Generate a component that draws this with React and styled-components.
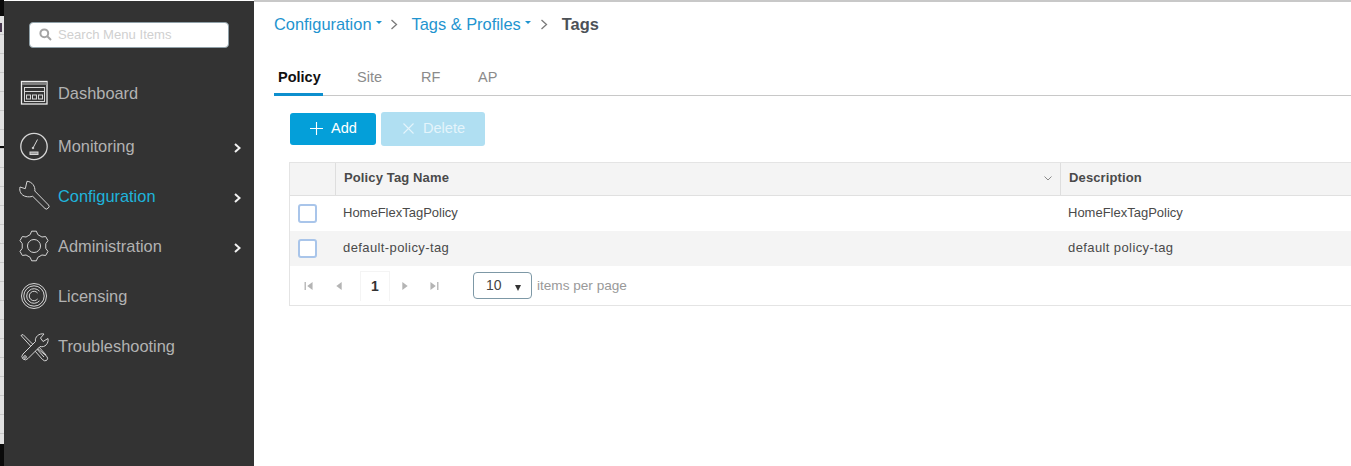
import React from "react";
import styled, { createGlobalStyle } from "styled-components";

const Global = createGlobalStyle`
  html, body { margin: 0; padding: 0; background: #fff; overflow: hidden; }
  body { font-family: "Liberation Sans", Arial, sans-serif; }
  * { box-sizing: border-box; }
`;

const Page = styled.div`
  display: flex;
  width: 1351px;
  height: 466px;
  overflow: hidden;
  background: #fff;
`;

const EdgeStrip = styled.div`
  width: 4px;
  flex: none;
  display: flex;
  flex-direction: column;
`;
const EdgeCap = styled.div`
  height: ${(p) => p.$h}px;
  flex: none;
  background: #0a0a0a;
`;
const EdgeBody = styled.div`
  flex: 1;
  background:
    linear-gradient(#0a0a0a, #0a0a0a) 0 130px / 100% 2px no-repeat,
    linear-gradient(#4a3a50, #4a3a50) 0 7px / 2px 9px no-repeat,
    repeating-linear-gradient(#e2e2e2 0 18px, #c8c8c8 18px 19px);
`;

const Sidebar = styled.aside`
  width: 250px;
  flex: none;
  margin-top: 1px;
  background: #333333;
  display: flex;
  flex-direction: column;
  padding: 21px 0 0 14px;
`;
const SearchBox = styled.div`
  width: 200px;
  height: 26px;
  margin-left: 11px;
  padding: 0 0 2px 9px;
  display: flex;
  align-items: center;
  gap: 6px;
  background: #fff;
  border: 1px solid #8fa0a8;
  border-radius: 4px;
  color: #d0d0d0;
  font-size: 13.1px;
`;
const Nav = styled.nav`
  margin-top: 20px;
  display: flex;
  flex-direction: column;
`;
const NavRow = styled.div`
  height: 50px;
  padding-right: 13px;
  margin-bottom: ${(p) => (p.$first ? 3 : 0)}px;
  display: flex;
  align-items: center;
  gap: 8px;
  font-size: 16.4px;
  color: ${(p) => (p.$active ? "#1fb4dc" : "#b2b2b2")};
`;
const NavIcon = styled.svg`
  width: 32px;
  height: 32px;
  flex: none;
  fill: none;
  stroke: ${(p) => p.$stroke || "#d6d6d6"};
  stroke-width: 1;
`;
const NavLabel = styled.span`
  flex: 1;
`;
const NavChevron = styled.svg`
  width: 7px;
  height: 10px;
  margin-top: 4px;
  fill: none;
  stroke: #f2f2f2;
  stroke-width: 2;
`;

const Main = styled.main`
  flex: 1;
  min-width: 0;
  border-top: 2px solid #c8c8c8;
  padding: 12px 0 0 20px;
  display: flex;
  flex-direction: column;
`;
const Breadcrumbs = styled.div`
  height: 20px;
  display: flex;
  align-items: center;
  font-size: 16.4px;
`;
const CrumbLink = styled.span`
  color: #1f94cf;
  display: flex;
  align-items: center;
  gap: 4px;
`;
const Caret = styled.i`
  width: 0;
  height: 0;
  margin-bottom: 3px;
  border-left: 3.5px solid transparent;
  border-right: 3.5px solid transparent;
  border-top: 3.5px solid #1f94cf;
`;
const CrumbSep = styled.svg`
  width: 8px;
  height: 11px;
  margin: 0 ${(p) => p.$right}px 0 ${(p) => p.$left}px;
  fill: none;
  stroke: #7a7a7a;
  stroke-width: 1.3;
`;
const CrumbCurrent = styled.span`
  color: #4c5157;
  font-weight: 700;
`;

const Tabs = styled.div`
  margin-top: 27px;
  height: 35px;
  display: flex;
  border-bottom: 1px solid #c8c8c8;
`;
const Tab = styled.div`
  width: ${(p) => p.$w}px;
  height: 35px;
  padding-left: ${(p) => p.$pad}px;
  padding-top: 8px;
  font-size: 14.5px;
  line-height: 17px;
  color: ${(p) => (p.$active ? "#111" : "#8b8b8b")};
  font-weight: ${(p) => (p.$active ? 700 : 400)};
  border-bottom: ${(p) => (p.$active ? "3px solid #0d8fce" : "none")};
`;

const Toolbar = styled.div`
  margin: 16px 0 0 16px;
  height: 34px;
  display: flex;
  align-items: center;
  gap: 5px;
`;
const ActionButton = styled.div`
  width: ${(p) => p.$w}px;
  height: ${(p) => (p.$off ? 34 : 32)}px;
  padding-bottom: 2px;
  border-radius: 3px;
  display: flex;
  align-items: center;
  justify-content: center;
  gap: 7px;
  font-size: 14.6px;
  color: ${(p) => (p.$off ? "#e4f4fb" : "#fff")};
  background: ${(p) => (p.$off ? "#b0dff2" : "#049fd9")};
`;
const ButtonGlyph = styled.svg`
  width: 15px;
  height: 15px;
  fill: none;
  stroke: currentColor;
  stroke-width: 1.1;
`;

const Grid = styled.div`
  margin: 16px 0 0 15px;
  border: 1px solid #e4e4e4;
  border-right: none;
`;
const Row = styled.div`
  display: grid;
  grid-template-columns: 46px 725px 1fr;
  align-items: center;
  height: ${(p) => p.$h}px;
  background: ${(p) => (p.$shade ? "#f4f4f4" : "#fff")};
  border-bottom: ${(p) => (p.$head ? "1px solid #e0e0e0" : "none")};
  font-size: 13px;
  color: #4a4a4a;
`;
const HeadCell = styled.div`
  height: 100%;
  padding: 0 8px 3px 8px;
  display: flex;
  align-items: center;
  justify-content: space-between;
  font-weight: 700;
  letter-spacing: 0.13px;
  color: #4a4a4a;
  border-right: ${(p) => (p.$rule ? "1px solid #dedede" : "none")};
`;
const SortGlyph = styled.svg`
  width: 8px;
  height: 5px;
  margin-top: 2px;
  fill: none;
  stroke: #8a8a8a;
  stroke-width: 1;
`;
const BodyCell = styled.div`
  padding: 0 0 2px ${(p) => p.$pad}px;
  letter-spacing: ${(p) => (p.$wide ? "0.4px" : "0")};
`;
const CheckBox = styled.div`
  width: 19px;
  height: 19px;
  margin-left: 8px;
  background: #fff;
  border: 2px solid #a9c5ea;
  border-radius: 3px;
`;

const Pager = styled.div`
  height: 39px;
  display: flex;
  align-items: center;
  padding-left: 14px;
  font-size: 13.6px;
  color: #999;
`;
const PageGlyph = styled.svg`
  width: 10px;
  height: 8px;
  margin-right: ${(p) => p.$gap}px;
  fill: #b4b4b4;
`;
const PageNumber = styled.div`
  width: 30px;
  height: 30px;
  margin-right: 10px;
  display: flex;
  align-items: center;
  justify-content: center;
  font-weight: 700;
  font-size: 14px;
  color: #333;
  border: 1px solid #f4f4f4;
  border-bottom: none;
`;
const PageSize = styled.div`
  width: 59px;
  height: 27px;
  margin-left: 34px;
  padding: 0 10px 2px 12px;
  display: flex;
  align-items: center;
  justify-content: space-between;
  font-size: 14px;
  color: #444;
  border: 1px solid #7d98a6;
  border-radius: 4px;
`;
const SizeArrow = styled.i`
  width: 0;
  height: 0;
  margin-top: 6px;
  border-left: 3.5px solid transparent;
  border-right: 3.5px solid transparent;
  border-top: 6px solid #333;
`;
const PagerNote = styled.span`
  margin-left: 5px;
`;

const gearPath = (() => {
  const teeth = 6, c = 16, out = 15, inn = 12, pts = [];
  for (let i = 0; i < teeth; i++) {
    const a = (i / teeth) * Math.PI * 2 - Math.PI / 2;
    const s = Math.PI / teeth;
    [[inn, -0.62], [out, -0.3], [out, 0.3], [inn, 0.62]].forEach(([r, k]) => {
      const t = a + k * s;
      pts.push(`${(c + r * Math.cos(t)).toFixed(2)} ${(c + r * Math.sin(t)).toFixed(2)}`);
    });
  }
  return "M" + pts.join("L") + "Z";
})();

const DashboardIcon = () => (
  <NavIcon viewBox="0 0 32 32">
    <rect x="3.5" y="4.5" width="25.5" height="22.5" stroke="#ececec" strokeWidth="1.3" />
    <rect x="4" y="5" width="24.5" height="3" fill="#808080" stroke="none" />
    <rect x="6.5" y="10.5" width="20" height="4" />
    <rect x="6.5" y="14.5" width="20" height="10" />
    <rect x="8.5" y="18" width="4" height="4" />
    <rect x="14.5" y="18" width="4" height="4" />
    <rect x="20.5" y="18" width="4" height="4" />
  </NavIcon>
);
const MonitoringIcon = () => (
  <NavIcon viewBox="0 0 32 32">
    <circle cx="16" cy="16.5" r="13.2" strokeWidth="1.3" />
    <path d="M15 18 L19.5 9.5" />
    <circle cx="15" cy="18" r="0.8" fill="#dcdcdc" />
    <rect x="12" y="22" width="8" height="2.5" fill="#999" />
  </NavIcon>
);
const ConfigurationIcon = () => (
  <NavIcon viewBox="0 0 32 32">
    <path d="M9 1.3 L7.3 8.7 L2 7 C1 11 3 15.5 8 16.5 C10 17 12.5 17 14.7 16.3 L27 28.5 Q28.5 30 30.3 28 Q32 26.5 30.5 25 L16.8 11 C17.5 6.5 14 1.5 9 1.3Z" />
  </NavIcon>
);
const AdministrationIcon = () => (
  <NavIcon viewBox="0 0 32 32">
    <path d={gearPath} />
    <circle cx="16" cy="16" r="6.5" />
  </NavIcon>
);
const LicensingIcon = () => (
  <NavIcon viewBox="0 0 32 32">
    <circle cx="16" cy="16" r="12.5" />
    <circle cx="16" cy="16" r="10.2" />
    <path d="M21.5 11.2 A7.3 7.3 0 1 0 21.5 20.8" />
    <path d="M19.6 13 A4.7 4.7 0 1 0 19.6 19" />
  </NavIcon>
);
const TroubleshootingIcon = () => (
  <NavIcon viewBox="0 0 32 32">
    <path d="M3 5.5 L5 4.5 L15.5 15 L13.5 17Z" />
    <path d="M13.5 17 L15.5 15 L29 26.5 Q30.5 29 28.5 30.5 Q26.5 31.5 24.5 29.5Z" />
    <path d="M18 18 L26 27 M20.5 16.5 L28 25" />
    <path d="M26 4 L22.5 8 L25 11.5 L30 8.5 C31 13 27 18 22 16.5 L10 28.5 Q7.5 31 5 29 Q2.5 26.5 5 24 L17.5 11.5 C16.5 7 21 3 26 4Z" fill="#333" />
    <circle cx="7" cy="27" r="1.3" />
  </NavIcon>
);

const navItems = [
  { label: "Dashboard", Icon: DashboardIcon },
  { label: "Monitoring", Icon: MonitoringIcon, more: true },
  { label: "Configuration", Icon: ConfigurationIcon, more: true, active: true },
  { label: "Administration", Icon: AdministrationIcon, more: true },
  { label: "Licensing", Icon: LicensingIcon },
  { label: "Troubleshooting", Icon: TroubleshootingIcon },
];

const pageIcons = {
  first: "M0 0h1.5v9H0zM9 0v9L3 4.5z",
  prev: "M8 0v9L2 4.5z",
  next: "M2 0v9l6-4.5z",
  last: "M8.5 0H10v9H8.5zM1 0v9l6-4.5z",
};

export default function App() {
  return (
    <Page>
      <Global />
      <EdgeStrip>
        <EdgeCap $h={16} />
        <EdgeBody />
        <EdgeCap $h={22} />
      </EdgeStrip>
      <Sidebar>
        <SearchBox>
          <svg width="13" height="13" viewBox="0 0 13 13" fill="none" stroke="#a4a4a4" strokeWidth="2">
            <circle cx="5.3" cy="5.3" r="3.9" />
            <path d="M8.3 8.3 L12 12" />
          </svg>
          Search Menu Items
        </SearchBox>
        <Nav>
          {navItems.map(({ label, Icon, more, active }, i) => (
            <NavRow key={label} $first={i === 0} $active={active}>
              <Icon />
              <NavLabel>{label}</NavLabel>
              {more && (
                <NavChevron viewBox="0 0 7 10">
                  <path d="M1 1 L5.5 5 L1 9" />
                </NavChevron>
              )}
            </NavRow>
          ))}
        </Nav>
      </Sidebar>
      <Main>
        <Breadcrumbs>
          <CrumbLink>Configuration<Caret /></CrumbLink>
          <CrumbSep $left={8} $right={14} viewBox="0 0 8 11"><path d="M1.5 1 L6.5 5.5 L1.5 10" /></CrumbSep>
          <CrumbLink>Tags &amp; Profiles<Caret /></CrumbLink>
          <CrumbSep $left={9} $right={14} viewBox="0 0 8 11"><path d="M1.5 1 L6.5 5.5 L1.5 10" /></CrumbSep>
          <CrumbCurrent>Tags</CrumbCurrent>
        </Breadcrumbs>
        <Tabs>
          <Tab $active $w={49} $pad={4}>Policy</Tab>
          <Tab $w={64} $pad={34}>Site</Tab>
          <Tab $w={64} $pad={34}>RF</Tab>
          <Tab $w={60} $pad={27}>AP</Tab>
        </Tabs>
        <Toolbar>
          <ActionButton $w={86}>
            <ButtonGlyph viewBox="0 0 15 15"><path d="M7.5 1 V14 M1 7.5 H14" /></ButtonGlyph>
            Add
          </ActionButton>
          <ActionButton $w={104} $off>
            <ButtonGlyph viewBox="0 0 15 15"><path d="M2.5 2.5 L12.5 12.5 M12.5 2.5 L2.5 12.5" /></ButtonGlyph>
            Delete
          </ActionButton>
        </Toolbar>
        <Grid>
          <Row $head $shade $h={33}>
            <HeadCell $rule />
            <HeadCell $rule>
              Policy Tag Name
              <SortGlyph viewBox="0 0 8 5"><path d="M0.5 0.5 L4 4 L7.5 0.5" /></SortGlyph>
            </HeadCell>
            <HeadCell>Description</HeadCell>
          </Row>
          <Row $h={35}>
            <CheckBox />
            <BodyCell $pad={7}>HomeFlexTagPolicy</BodyCell>
            <BodyCell $pad={7}>HomeFlexTagPolicy</BodyCell>
          </Row>
          <Row $shade $h={35}>
            <CheckBox />
            <BodyCell $pad={7} $wide>default-policy-tag</BodyCell>
            <BodyCell $pad={7} $wide>default policy-tag</BodyCell>
          </Row>
          <Pager>
            <PageGlyph $gap={20} viewBox="0 0 10 9"><path d={pageIcons.first} /></PageGlyph>
            <PageGlyph $gap={16} viewBox="0 0 10 9"><path d={pageIcons.prev} /></PageGlyph>
            <PageNumber>1</PageNumber>
            <PageGlyph $gap={19} viewBox="0 0 10 9"><path d={pageIcons.next} /></PageGlyph>
            <PageGlyph $gap={0} viewBox="0 0 10 9"><path d={pageIcons.last} /></PageGlyph>
            <PageSize>10<SizeArrow /></PageSize>
            <PagerNote>items per page</PagerNote>
          </Pager>
        </Grid>
      </Main>
    </Page>
  );
}
